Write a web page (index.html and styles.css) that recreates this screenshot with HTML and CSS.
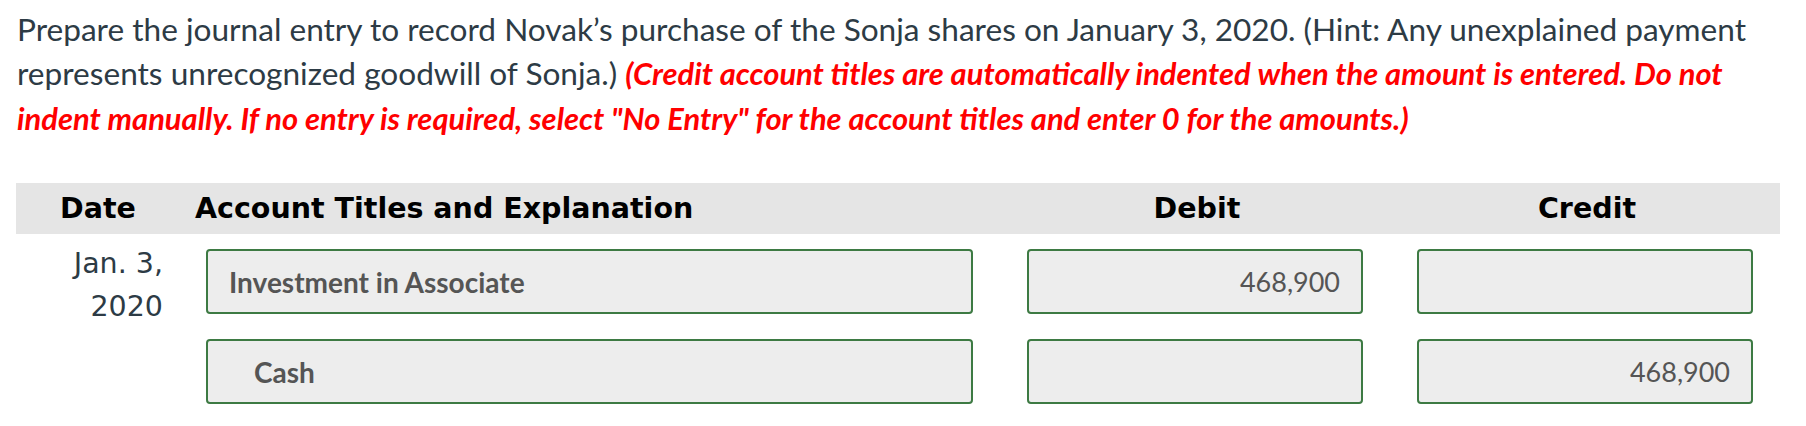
FILE: index.html
```html
<!DOCTYPE html>
<html>
<head>
<meta charset="utf-8">
<link rel="stylesheet" href="styles.css">
</head>
<body>
<div class="page">
  <p class="prompt">Prepare the journal entry to record Novak’s purchase of the Sonja shares on January 3, 2020. (Hint: Any unexplained payment represents unrecognized goodwill of Sonja.) <span class="note">(Credit account titles are automatically indented when the amount is entered. Do not indent manually. If no entry is required, select "No Entry" for the account titles and enter 0 for the amounts.)</span></p>

  <div class="journal">
    <div class="head-row">
      <div class="h h-date">Date</div>
      <div class="h h-acct">Account Titles and Explanation</div>
      <div class="h h-num">Debit</div>
      <div class="h h-num">Credit</div>
    </div>
    <div class="entry">
      <div class="date">Jan. 3,<br>2020</div>
      <div class="rows">
        <div class="row">
          <div class="box acct">Investment in Associate</div>
          <div class="box amt">468,900</div>
          <div class="box amt"></div>
        </div>
        <div class="row">
          <div class="box acct credit">Cash</div>
          <div class="box amt"></div>
          <div class="box amt">468,900</div>
        </div>
      </div>
    </div>
  </div>
</div>
</body>
</html>
```

FILE: styles.css
```css
html, body {
  margin: 0;
  padding: 0;
  background: #ffffff;
}

.page {
  padding: 0 26px 0 16px;
}

.prompt {
  margin: 0;
  padding-top: 7px;
  padding-left: 1px;
  font-family: Lato, "Open Sans", sans-serif;
  font-size: 31.6px;
  line-height: 44px;
  color: #2d3b45;
}

.note {
  color: #ff0000;
  font-weight: bold;
  font-style: italic;
  font-size: 30.9px;
}

.journal {
  margin-top: 42px;
}

.head-row {
  display: flex;
  align-items: center;
  height: 51px;
  background: #e5e5e5;
}

.h {
  box-sizing: border-box;
  font-family: "DejaVu Sans", Verdana, sans-serif;
  font-weight: bold;
  font-size: 28.5px;
  color: #000;
}

.h-date {
  width: 164px;
  text-align: center;
}

.h-acct {
  width: 793px;
  padding-left: 15px;
}

.h-num {
  width: 336px;
  margin-left: 54px;
  text-align: center;
  padding-left: 4px;
}

.entry {
  display: flex;
  padding-top: 15px;
}

.date {
  box-sizing: border-box;
  width: 164px;
  padding-right: 17px;
  margin-top: -7px;
  text-align: right;
  font-family: "DejaVu Sans", Verdana, sans-serif;
  font-size: 28.5px;
  line-height: 43px;
  color: #2d3b45;
}

.rows {
  display: flex;
  flex-direction: column;
  gap: 25px;
  margin-left: 26px;
}

.row {
  display: flex;
  gap: 54px;
}

.box {
  box-sizing: border-box;
  height: 65px;
  border: 2px solid #3d7a43;
  border-radius: 4px;
  background: #ededed;
  display: flex;
  align-items: center;
  font-family: Lato, "Open Sans", sans-serif;
  color: #555555;
}

.acct {
  width: 767px;
  padding-left: 21px;
  font-size: 28px;
  font-weight: bold;
}

.acct.credit {
  padding-left: 46px;
}

.amt {
  width: 336px;
  justify-content: flex-end;
  padding-right: 21px;
  font-size: 27px;
}
```
